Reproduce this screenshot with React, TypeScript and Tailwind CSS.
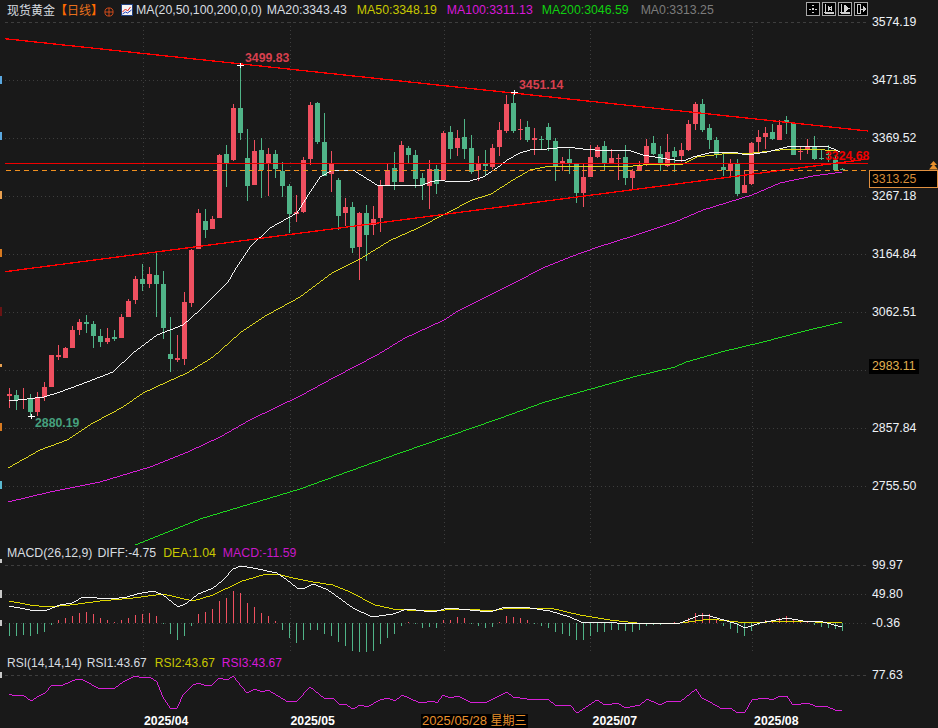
const RED = "#ef5060";
const GREEN = "#50b488";

// [colour, body top, body bottom, wick top, wick bottom] in page pixels, one candle every 7px
const candles: [string, number, number, number, number][] = [
  ["r", 394, 396, 388, 408], ["g", 395, 400, 390, 410], ["r", 399, 400, 388, 409], ["g", 399, 412, 394, 416],
  ["r", 397, 412, 392, 416], ["r", 387, 397, 382, 401], ["r", 355, 387, 355, 387], ["r", 355, 357, 345, 360],
  ["r", 348, 358, 347, 358], ["r", 330, 348, 326, 348], ["r", 322, 330, 319, 335], ["g", 322, 324, 315, 333],
  ["g", 324, 336, 321, 348], ["g", 336, 342, 329, 347], ["r", 338, 342, 328, 344], ["g", 337, 339, 330, 341],
  ["r", 317, 338, 314, 338], ["r", 301, 317, 299, 317], ["r", 279, 300, 276, 304], ["g", 279, 284, 264, 291],
  ["r", 274, 284, 267, 288], ["g", 275, 284, 253, 317], ["g", 284, 328, 271, 339], ["g", 354, 359, 317, 372],
  ["r", 358, 360, 335, 362], ["r", 302, 359, 292, 365], ["r", 250, 303, 249, 307], ["r", 213, 249, 209, 249],
  ["g", 221, 230, 209, 238], ["r", 219, 229, 216, 229], ["r", 155, 218, 154, 218], ["g", 154, 163, 145, 187],
  ["r", 108, 160, 104, 161], ["g", 108, 133, 64, 140], ["g", 158, 186, 129, 201], ["r", 151, 185, 140, 185],
  ["g", 150, 170, 138, 198], ["r", 154, 163, 148, 196], ["g", 154, 169, 150, 178], ["g", 171, 186, 162, 197],
  ["g", 186, 214, 184, 233], ["r", 212, 214, 195, 222], ["r", 160, 212, 157, 213], ["r", 105, 159, 102, 165],
  ["g", 103, 142, 102, 144], ["g", 142, 176, 113, 176], ["r", 164, 174, 151, 192], ["g", 180, 216, 178, 230],
  ["r", 207, 213, 198, 226], ["g", 207, 248, 202, 253], ["r", 213, 247, 212, 280], ["g", 213, 235, 205, 261],
  ["r", 219, 225, 206, 235], ["r", 185, 218, 180, 232], ["r", 170, 185, 164, 185], ["g", 168, 182, 152, 190],
  ["r", 145, 182, 141, 182], ["g", 148, 155, 146, 163], ["g", 155, 179, 150, 188], ["g", 178, 185, 173, 200],
  ["r", 169, 186, 160, 209], ["g", 169, 184, 165, 194], ["r", 133, 180, 131, 181], ["g", 132, 149, 126, 159],
  ["r", 138, 148, 130, 156], ["g", 137, 149, 119, 159], ["g", 148, 172, 135, 174], ["r", 164, 170, 156, 181],
  ["g", 164, 166, 150, 176], ["r", 148, 167, 144, 169], ["r", 130, 147, 122, 156], ["r", 104, 131, 95, 133],
  ["g", 103, 131, 92, 133], ["r", 129, 130, 119, 140], ["g", 127, 140, 121, 142], ["r", 138, 140, 128, 155],
  ["g", 139, 140, 136, 150], ["g", 127, 140, 123, 151], ["g", 141, 166, 138, 181], ["r", 161, 163, 157, 171],
  ["g", 159, 164, 149, 174], ["g", 164, 193, 164, 203], ["r", 177, 193, 163, 207], ["r", 157, 177, 145, 177],
  ["r", 147, 157, 145, 158], ["g", 146, 163, 141, 171], ["r", 158, 163, 149, 163], ["r", 158, 159, 154, 180],
  ["g", 157, 178, 145, 185], ["r", 171, 178, 169, 189], ["r", 165, 171, 161, 171], ["r", 146, 165, 139, 166],
  ["g", 143, 154, 136, 155], ["g", 154, 163, 146, 171], ["r", 152, 166, 134, 167], ["g", 151, 157, 147, 172],
  ["r", 150, 156, 143, 162], ["r", 124, 150, 120, 151], ["r", 104, 124, 102, 130], ["g", 104, 130, 99, 132],
  ["g", 128, 140, 124, 149], ["g", 140, 154, 137, 158], ["g", 167, 170, 154, 176], ["r", 164, 171, 159, 176],
  ["g", 164, 194, 159, 196], ["r", 185, 193, 170, 193], ["r", 143, 184, 142, 185], ["r", 137, 142, 130, 152],
  ["r", 133, 137, 127, 149], ["g", 132, 139, 124, 140], ["r", 125, 140, 120, 140], ["g", 120, 123, 116, 134],
  ["g", 123, 155, 123, 155], ["r", 151, 152, 147, 160], ["r", 147, 150, 139, 154], ["g", 147, 159, 136, 160],
  ["g", 158, 159, 150, 160], ["g", 154, 155, 145, 162], ["g", 160, 170, 155, 170], ["g", 169, 170, 168, 170],
];

const ma20 = "9,401 44,397 60,392 87,382 113,372 133,353 157,335 183,325 200,310 217,293 228,282 235,270 250,247 270,228 297,213 307,197 320,177 333,170 353,170 377,185 400,185 420,186 430,182 440,180 450,182 470,181 483,177 497,168 507,160 520,153 533,149 547,149 567,147 583,149 607,151 628,150 643,155 667,159 683,161 693,157 713,152 733,152 747,155 767,152 787,147 827,146 840,152";
const ma50 = "8,468 40,450 67,440 93,423 123,407 143,393 167,382 187,373 213,357 240,333 267,315 300,297 332,273 360,259 391,240 416,229 447,213 472,200 491,194 513,180 530,170 550,166 580,166 633,166 653,164 683,164 697,157 730,153 753,153 780,150 813,149 837,151";
const ma100 = "8,502 50,492 100,482 150,467 190,451 220,437 250,420 300,396 335,377 377,355 405,338 444,320 458,311 510,285 545,267 570,257 598,247 633,236 675,222 703,210 742,198 752,195 780,183 813,176 842,172";
const ma200 = "135,545 200,519 300,489 400,453 498,419 545,402 591,389 633,377 675,367 686,362 721,352 763,342 801,332 842,322";

// histogram heights, 3x scale, measured up from the zero line
const macdBars = [
  -38, -38, -36, -38, -32, -26, -6, 8, 14, 22, 30, 32, 26, 16, 8, 4, 8, 14, 24, 26, 30, 22, -4, -32, -52, -40, -8, 26, 34, 42,
  66, 75, 96, 90, 60, 48, 30, 20, 6, -20, -44, -60, -50, -20, -20, -32, -38, -58, -70, -84, -88, -88, -84, -64, -44, -32, -10, 4, -4, -14,
  -12, -16, 8, 10, 18, 16, -4, -8, -16, -12, 4, 22, 18, 16, 8, -4, -8, -16, -28, -32, -38, -50, -50, -40, -28, -26, -22, -22, -24, -26,
  -20, -10, -6, -6, -4, 2, 4, 14, 30, 30, 26, 10, -10, -18, -30, -38, -24, -6, 8, 10, 14, 22, 12, 8, 4, -6, -12, -14, -18, -24,
];

const diff = "9,606 30,610 47,610 60,605 72,603 83,597 110,599 127,597 137,594 153,591 163,595 178,607 187,603 198,594 213,588 223,580 233,569 241,566 253,568 277,573 287,580 297,588 305,588 313,584 328,590 353,608 372,617 393,614 407,609 433,612 448,608 470,610 490,612 505,607 523,607 550,611 570,617 583,623 597,622 637,624 680,623 700,615 710,616 737,624 745,628 760,623 787,618 803,621 823,622 842,627";
const dea = "9,601 30,605 47,607 70,605 100,601 133,598 163,594 193,601 213,595 242,581 263,575 277,574 293,578 313,582 333,585 350,592 375,605 393,609 420,611 470,609 490,611 510,608 550,608 580,615 610,620 637,623 680,623 710,619 747,623 787,621 842,623";
const rsi = "9,694 15,696 23,695 31,701 37,697 45,693 52,685 63,685 77,679 83,680 100,689 115,688 123,682 135,676 143,678 150,677 157,682 163,697 170,708 177,708 183,695 193,685 198,683 207,686 212,685 219,678 227,680 233,676 247,693 255,689 262,692 268,690 288,702 297,701 310,687 325,699 333,698 340,705 345,704 353,709 360,705 367,707 380,700 388,698 395,701 402,695 420,703 433,701 437,703 443,695 450,698 458,696 470,702 487,702 507,692 513,697 527,699 548,699 556,706 570,705 577,713 597,700 605,705 618,703 625,708 640,705 647,699 660,705 668,701 680,702 696,689 702,698 710,702 722,709 730,708 738,713 745,712 752,700 765,698 772,700 780,696 787,696 793,705 808,703 815,706 825,706 835,710 842,711";

const gridX = [143, 290, 444, 590, 752];

const Grid = ({ ys, top, bottom }: { ys: number[]; top: number; bottom: number }) => (
  <g stroke="#3e3e3e" strokeWidth="1" shapeRendering="crispEdges">
    {ys.map((y) => (
      <line key={y} x1="5" x2="866" y1={y + 0.5} y2={y + 0.5} strokeDasharray="1 3" />
    ))}
    {gridX.map((x) => (
      <line key={x} x1={x + 0.5} x2={x + 0.5} y1={top} y2={bottom} strokeDasharray="1 3" />
    ))}
  </g>
);

const Line = ({ points, color, width = 0.95 }: { points: string; color: string; width?: number }) => (
  <polyline points={points} fill="none" stroke={color} strokeWidth={width} shapeRendering="crispEdges" />
);

const Cross = ({ x, y }: { x: number; y: number }) => (
  <g fill="#ffffff" shapeRendering="crispEdges">
    <rect x={x - 3} y={y} width="7" height="1" />
    <rect x={x} y={y - 2} width="1" height="5" />
  </g>
);

const MainChart = () => (
  <svg className="block" width="870" height="545" viewBox="0 0 870 545">
    <Grid ys={[80, 138, 196, 254, 312, 370, 428, 486]} top={22} bottom={545} />
    <line x1="5" x2="866" y1="22.5" y2="22.5" stroke="#3e3e3e" strokeDasharray="3 3" shapeRendering="crispEdges" />
    <g fill="#d87a20" shapeRendering="crispEdges">
      <rect x="0" y="76" width="1.5" height="8" fill="#5aa8e0" />
      <rect x="0" y="132" width="1.5" height="8" fill="#5aa8e0" />
      <rect x="0" y="191" width="1.5" height="8" fill="#e8a050" />
      <rect x="0" y="249" width="1.5" height="8" />
      <rect x="0" y="307" width="1.5" height="9" fill="#6a1414" />
      <rect x="0" y="364" width="1.5" height="3" fill="#e8a050" />
      <rect x="0" y="423" width="1.5" height="8" />
      <rect x="0" y="481" width="1.5" height="8" fill="#5ab8d0" />
    </g>
    <g shapeRendering="crispEdges">
      {candles.map(([c, top, bottom, high, low], i) => {
        const x = 9 + 7 * i;
        const fill = c === "r" ? RED : GREEN;
        return (
          <g key={i} fill={fill}>
            <rect x={x} y={high} width="1" height={low - high} />
            <rect x={x - 2} y={top} width="5" height={bottom - top} />
          </g>
        );
      })}
    </g>
    <Line points={ma200} color="#20e020" />
    <Line points={ma100} color="#e020e0" />
    <Line points={ma50} color="#e8e020" />
    <Line points={ma20} color="#ffffff" />
    <Line points="5,38.7 868,131" color="#ff0000" width={1.3} />
    <Line points="5,271.7 868,159" color="#ff0000" width={1.3} />
    <line x1="5" x2="868" y1="163.5" y2="163.5" stroke="#f00000" shapeRendering="crispEdges" />
    <line x1="6" x2="868" y1="170.5" y2="170.5" stroke="#f09020" strokeDasharray="5 4" shapeRendering="crispEdges" />
    <Cross x={240} y={65} />
    <Cross x={514} y={92} />
    <Cross x={31} y={416} />
  </svg>
);

const MacdChart = () => (
  <svg className="block" width="870" height="108" viewBox="0 545 870 108">
    <Grid ys={[594, 623]} top={566} bottom={653} />
    <line x1="5" x2="866" y1="565.5" y2="565.5" stroke="#3e3e3e" strokeDasharray="3 3" shapeRendering="crispEdges" />
    <g shapeRendering="crispEdges">
      <rect x="0" y="559" width="1.5" height="4" fill="#c8c8c8" />
      <rect x="0" y="590" width="1.5" height="8" fill="#c8c8c8" />
      <rect x="0" y="620" width="1.5" height="6" fill="#c8c8c8" />
      {macdBars.map((v, i) => {
        const h = Math.abs(v) / 3;
        return (
          <rect key={i} x={9 + 7 * i} y={v > 0 ? 623 - h : 623} width="1" height={h} fill={v > 0 ? RED : GREEN} />
        );
      })}
    </g>
    <Line points={dea} color="#e8e000" />
    <Line points={diff} color="#ffffff" />
  </svg>
);

const RsiChart = () => (
  <svg className="block" width="870" height="60" viewBox="0 653 870 60">
    <line x1="5" x2="866" y1="675.5" y2="675.5" stroke="#3e3e3e" strokeDasharray="3 3" shapeRendering="crispEdges" />
    <rect x="0" y="672" width="1.5" height="6" fill="#c8c8c8" shapeRendering="crispEdges" />
    <Line points={rsi} color="#e020e0" />
  </svg>
);

const ToolIcon = ({ children }: { children: React.ReactNode }) => (
  <svg width="14" height="14" viewBox="0 0 14 14" className="block bg-black" fill="none" stroke="#d0d0d0" strokeWidth="1" shapeRendering="crispEdges">
    <rect x="0.5" y="0.5" width="13" height="13" stroke="#a8a8a8" />
    {children}
  </svg>
);

const Toolbar = () => (
  <div className="absolute left-[806px] top-[2px] flex gap-[2px]">
    <ToolIcon>
      <path d="M6 3.5h2M6 10.5h2M3 7h2M9 7h2M6.5 6.5h1v1h-1z" />
    </ToolIcon>
    <ToolIcon>
      <path d="M3.5 2v9.5H12M2 10.5h10M6.5 4v5M9.5 4v5M7 6.5l2-1.5v3z" />
    </ToolIcon>
    <ToolIcon>
      <path d="M3.5 2v9.5H12M2 10.5h10" />
      <path d="M6 3l5 3.5L6 10z" fill="#d0d0d0" />
    </ToolIcon>
    <ToolIcon>
      <path d="M3 2.5h3v9H3zM6 7h6" />
      <path d="M9 4.5L12 7L9 9.5z" fill="#d0d0d0" />
    </ToolIcon>
  </div>
);

const Legend = () => (
  <div className="absolute left-0 top-0 flex h-[21px] items-center pl-[7px] text-[12.3px] leading-none whitespace-nowrap text-[#d8dde0]">
    <span className="text-[12px]">现货黄金</span>
    <span className="text-[12px] text-[#e8701c]">
      <span className="font-bold text-[#ff6a00]">【</span>日线<span className="font-bold text-[#ff6a00]">】</span>
    </span>
    <svg width="11" height="11" viewBox="0 0 11 11" className="ml-[1px] mt-[3px] h-[10px] w-[10px]" fill="none" stroke="#e0501a">
      <circle cx="5.5" cy="5.5" r="4.5" />
      <path d="M1 5.5h9M5.5 1v9" />
    </svg>
    <svg width="12" height="12" viewBox="0 0 12 12" className="ml-[7px] -mt-[2px]" fill="none">
      <rect x="0.5" y="0.5" width="11" height="11" fill="#f4f4f4" stroke="#204080" />
      <path d="M1.5 8l3-3 2 2 3-4" stroke="#e02020" />
      <path d="M1.5 10l3-2 2 1 4-3" stroke="#2040c0" />
    </svg>
    <span className="ml-[3px]">MA(20,50,100,200,0,0)</span>
    <span className="ml-[5px]">MA20:3343.43</span>
    <span className="ml-[10px] text-[#c8c800]">MA50:3348.19</span>
    <span className="ml-[10px] text-[#d818d8]">MA100:3311.13</span>
    <span className="ml-[9px] text-[#10d010]">MA200:3046.59</span>
    <span className="ml-[12px] text-[#7c7c7c]">MA0:3313.25</span>
  </div>
);

const Marker = ({ className, children }: { className: string; children: React.ReactNode }) => (
  <span className={`absolute text-[12.3px] leading-none font-bold ${className}`}>{children}</span>
);

const mainAxis = ["3574.19", "3471.85", "3369.52", "3267.18", "3164.84", "3062.51", "", "2857.84", "2755.50"];

const App = () => {
  return (
    <div className="relative flex h-[728px] w-[938px] flex-col overflow-hidden bg-[#191919] font-['Liberation_Sans','Noto_Sans_CJK_SC',sans-serif] text-[#eef2f6]">
      <section className="relative flex h-[545px]">
        <div className="w-[870px] shrink-0">
          <MainChart />
        </div>
        <div className="mt-[15px] flex flex-col pl-[2px] text-[12.3px]">
          {mainAxis.map((p, i) => (
            <div key={i} className="flex h-[58px] shrink-0 items-start leading-[14px]">
              {p}
            </div>
          ))}
        </div>
        <Legend />
        <Toolbar />
        <Marker className="left-[245px] top-[52px] text-[#d8404e]">3499.83</Marker>
        <Marker className="left-[519px] top-[79px] text-[#d8404e]">3451.14</Marker>
        <Marker className="left-[35px] top-[417px] text-[#46a07e]">2880.19</Marker>
        <Marker className="left-[825px] top-[150px] text-[#f00000]">3324.68</Marker>
        <div className="absolute left-[869px] top-[170px] flex h-[18px] w-[69px] items-center border border-[#e09040] bg-black pl-[2px] text-[12.3px] leading-none text-[#d88c38]">
          3313.25
        </div>
        <div className="absolute left-[869px] top-[359px] flex h-[15px] w-[50px] items-center bg-black pl-[3px] text-[12.3px] leading-none text-[#e0b050]">
          2983.11
        </div>
        <svg className="absolute left-[929px] top-[161px]" width="9" height="9" viewBox="0 0 9 9" fill="#e8902c">
          <path d="M4.5 0L8 4H1z" />
          <path d="M4.5 3L9 8.5H0z" />
        </svg>
      </section>

      <section className="relative flex h-[108px]">
        <div className="w-[870px] shrink-0">
          <MacdChart />
        </div>
        <div className="flex flex-col pl-[2px] pt-[13px] text-[12.3px]">
          {["99.97", "49.80", "-0.36"].map((p) => (
            <div key={p} className="h-[29px] leading-[14px]">
              {p}
            </div>
          ))}
        </div>
        <div className="absolute left-[7px] top-0 flex h-[16px] items-center text-[12.3px] leading-none whitespace-nowrap text-[#d8dde0]">
          <span>MACD(26,12,9)</span>
          <span className="ml-[5px]">DIFF:-4.75</span>
          <span className="ml-[7px] text-[#c8c800]">DEA:1.04</span>
          <span className="ml-[7px] text-[#c818c8]">MACD:-11.59</span>
        </div>
      </section>

      <section className="relative flex h-[60px]">
        <div className="w-[870px] shrink-0">
          <RsiChart />
        </div>
        <div className="pl-[2px] pt-[15px] text-[12.3px] leading-[14px]">77.63</div>
        <div className="absolute left-[7px] top-[2px] flex h-[16px] items-center text-[12px] leading-none whitespace-nowrap text-[#d8dde0]">
          <span>RSI(14,14,14)</span>
          <span className="ml-[5px]">RSI1:43.67</span>
          <span className="ml-[8px] text-[#c8c800]">RSI2:43.67</span>
          <span className="ml-[7px] text-[#d818d8]">RSI3:43.67</span>
        </div>
      </section>

      <footer className="flex h-[15px] items-end text-[12.3px] leading-[14px] whitespace-nowrap">
        <span className="ml-[144px] font-bold text-white">2025/04</span>
        <span className="ml-[102px] font-bold text-white">2025/05</span>
        <span className="ml-[86px] bg-black px-[1px] text-[13px] text-[#e8902c]">
          2025/05/28 <span className="text-[12px]">星期三</span>
        </span>
        <span className="ml-[65px] font-bold text-white">2025/07</span>
        <span className="ml-[117px] font-bold text-white">2025/08</span>
      </footer>
    </div>
  );
};

export default App;
